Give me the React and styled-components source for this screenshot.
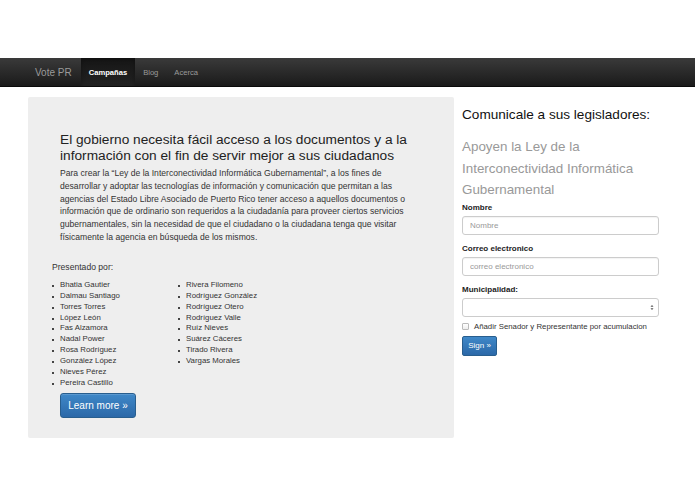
import React from "react"
import styled, { createGlobalStyle } from "styled-components"

const GlobalStyle = createGlobalStyle`
    html, body {
        margin: 0;
        padding: 0;
        background: #fff;
        font-family: "Liberation Sans", Arial, sans-serif;
        color: #333;
    }
    * { box-sizing: border-box; }
`

const leftNames = [
    "Bhatia Gautier",
    "Dalmau Santiago",
    "Torres Torres",
    "López León",
    "Fas Alzamora",
    "Nadal Power",
    "Rosa Rodríguez",
    "González López",
    "Nieves Pérez",
    "Pereira Castillo",
]

const rightNames = [
    "Rivera Filomeno",
    "Rodríguez González",
    "Rodríguez Otero",
    "Rodríguez Valle",
    "Ruíz Nieves",
    "Suárez Cáceres",
    "Tirado Rivera",
    "Vargas Morales",
]

const Page = styled.div`
    padding-top: 58px;
`

const NavBar = styled.nav`
    height: 29px;
    background: linear-gradient(#3a3a3a, #1a1a1a);
    border-bottom: 1px solid #0a0a0a;
    display: flex;
    align-items: stretch;
    padding-left: 35px;
`

const Brand = styled.a`
    display: flex;
    align-items: center;
    color: #9a9a9a;
    font-size: 10px;
    padding-right: 9px;
`

const NavLink = styled.a`
    display: flex;
    align-items: center;
    padding: 0 8px;
    font-size: 7.6px;
    color: ${props => props.active ? "#fff" : "#9a9a9a"};
    font-weight: ${props => props.active ? 700 : 400};
    background: ${props => props.active ? "linear-gradient(#161616, #222)" : "transparent"};
    box-shadow: ${props => props.active ? "inset 0 2px 4px rgba(0,0,0,0.3)" : "none"};
`

const Container = styled.div`
    display: flex;
    align-items: flex-start;
    padding: 10px 0 0 28px;
    gap: 8px;
`

const Jumbo = styled.section`
    width: 426px;
    height: 341px;
    background: #eeeeee;
    border-radius: 2px;
    padding: 35px 30px 0 24px;
`

const Lead = styled.div`
    padding-left: 8px;
`

const Headline = styled.h1`
    margin: 0;
    font-size: 13.7px;
    line-height: 16px;
    font-weight: 400;
    color: #222;
`

const Intro = styled.p`
    margin: 3px 0 0;
    font-size: 8.6px;
    line-height: 12.8px;
    color: #333;
`

const Presented = styled.p`
    margin: 18px 0 0;
    font-size: 8.6px;
    color: #333;
`

const Lists = styled.div`
    display: flex;
    margin-top: 8px;
`

const NameList = styled.ul`
    list-style: none;
    margin: 0;
    padding: 0;
    width: 126px;
`

const Name = styled.li`
    position: relative;
    padding-left: 8px;
    font-size: 7.8px;
    line-height: 10.9px;
    color: #333;

    &::before {
        content: "";
        position: absolute;
        left: 0;
        top: 5px;
        width: 2px;
        height: 2px;
        background: #444;
    }
`

const BigButton = styled.button`
    margin: 4px 0 0 8px;
    width: 76px;
    height: 25px;
    border: 1px solid #285e8e;
    border-radius: 3px;
    background: linear-gradient(#3f88c8, #2b68a8);
    color: #fff;
    font-family: "Liberation Sans", Arial, sans-serif;
    font-size: 10px;
    padding: 0;
    box-shadow: inset 0 1px 0 rgba(255,255,255,0.15);
`

const Side = styled.aside`
    width: 197px;
`

const SideTitle = styled.h2`
    margin: 10px 0 0;
    font-size: 13.6px;
    line-height: 16px;
    font-weight: 400;
    color: #111;
`

const SideSub = styled.p`
    margin: 13px 0 0;
    font-size: 13.4px;
    line-height: 21.5px;
    color: #999;
`

const Label = styled.label`
    display: block;
    margin-top: ${props => props.first ? "2px" : "9px"};
    font-size: 8px;
    line-height: 10px;
    font-weight: 700;
    color: #222;
`

const Input = styled.input`
    display: block;
    margin-top: 3px;
    width: 197px;
    height: 19px;
    border: 1px solid #ccc;
    border-radius: 3px;
    padding: 0 7px;
    font-family: "Liberation Sans", Arial, sans-serif;
    font-size: 8px;
    color: #555;
    box-shadow: inset 0 1px 1px rgba(0,0,0,0.05);

    &::placeholder { color: #999; }
`

const SelectBox = styled.div`
    margin-top: 3px;
    width: 197px;
    height: 19px;
    border: 1px solid #ccc;
    border-radius: 3px;
    background: #fff;
    display: flex;
    align-items: center;
    justify-content: flex-end;
    padding-right: 4px;
`

const CheckRow = styled.label`
    display: flex;
    align-items: center;
    gap: 5px;
    margin-top: 5px;
    font-size: 7.8px;
    color: #333;
`

const Box = styled.span`
    width: 7px;
    height: 7px;
    border: 1px solid #bbb;
    border-radius: 1px;
    background: linear-gradient(#fff, #eee);
`

const SignButton = styled.button`
    margin-top: 5px;
    width: 35px;
    height: 20px;
    border: 1px solid #285e8e;
    border-radius: 2px;
    background: linear-gradient(#3f88c8, #2b68a8);
    color: #fff;
    font-family: "Liberation Sans", Arial, sans-serif;
    font-size: 8px;
    padding: 0;
`

const Arrows = () => (
    <svg width="4" height="7" viewBox="0 0 4 7">
        <path d="M0.5 2.8 L2 1 L3.5 2.8 Z" fill="#555" />
        <path d="M0.5 4.2 L2 6 L3.5 4.2 Z" fill="#555" />
    </svg>
)

const App = () => {
    return (
        <Page>
            <GlobalStyle />
            <NavBar>
                <Brand>Vote PR</Brand>
                <NavLink active>Campañas</NavLink>
                <NavLink>Blog</NavLink>
                <NavLink>Acerca</NavLink>
            </NavBar>
            <Container>
                <Jumbo>
                    <Lead>
                        <Headline>El gobierno necesita fácil acceso a los documentos y a la información con el fin de servir mejor a sus ciudadanos</Headline>
                        <Intro>Para crear la “Ley de la Interconectividad Informática Gubernamental”, a los fines de desarrollar y adoptar las tecnologías de información y comunicación que permitan a las agencias del Estado Libre Asociado de Puerto Rico tener acceso a aquellos documentos o información que de ordinario son requeridos a la ciudadanía para proveer ciertos servicios gubernamentales, sin la necesidad de que el ciudadano o la ciudadana tenga que visitar físicamente la agencia en búsqueda de los mismos.</Intro>
                    </Lead>
                    <Presented>Presentado por:</Presented>
                    <Lists>
                        <NameList>
                            {leftNames.map(n => <Name key={n}>{n}</Name>)}
                        </NameList>
                        <NameList>
                            {rightNames.map(n => <Name key={n}>{n}</Name>)}
                        </NameList>
                    </Lists>
                    <BigButton>Learn more »</BigButton>
                </Jumbo>
                <Side>
                    <SideTitle>Comunicale a sus legisladores:</SideTitle>
                    <SideSub>Apoyen la Ley de la Interconectividad Informática Gubernamental</SideSub>
                    <Label first>Nombre</Label>
                    <Input placeholder="Nombre" />
                    <Label>Correo electronico</Label>
                    <Input placeholder="correo electronico" />
                    <Label>Municipalidad:</Label>
                    <SelectBox><Arrows /></SelectBox>
                    <CheckRow><Box />Añadir Senador y Representante por acumulacion</CheckRow>
                    <SignButton>Sign »</SignButton>
                </Side>
            </Container>
        </Page>
    )
}

export default App
